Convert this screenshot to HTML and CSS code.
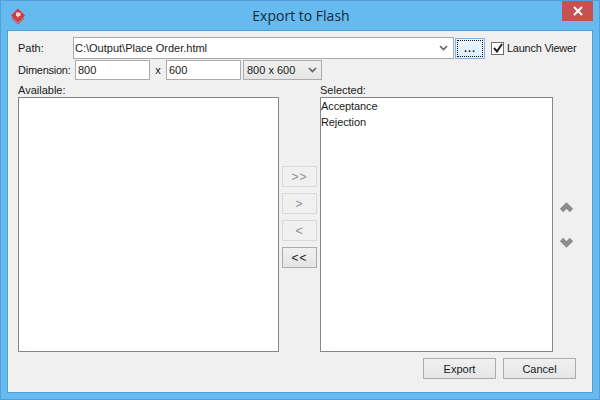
FILE: index.html
```html
<!DOCTYPE html>
<html lang="en-us">
<head>
  <meta charset="utf-8">
  <title>Export to Flash</title>
  <link rel="stylesheet" href="styles.css">
</head>
<body>
  <div class="window">
    <div class="titlebar">
      <svg class="logo" width="16" height="17" viewBox="0 0 16 17">
        <path d="M8 0.5 L15 7.5 L8 14.5 L1 7.5 Z" fill="#d23a40"/>
        <path d="M2 10 L8 16 L14 10" fill="none" stroke="#d4565c" stroke-width="1.2"/>
        <path d="M6 4.5 H10.5 V8 H9 L7.5 10 L7 8 H6 Z" fill="#f6d5d6"/>
      </svg>
      <div class="title">Export to Flash</div>
      <div class="close">
        <svg width="10" height="10" viewBox="0 0 10 10">
          <path d="M1 1 L9 9 M9 1 L1 9" stroke="#fff" stroke-width="2"/>
        </svg>
      </div>
    </div>
    <div class="content">
      <div class="row path-row">
        <label class="path-label">Path:</label>
        <div class="field combo path-combo">
          <span class="grow">C:\Output\Place Order.html</span>
          <svg class="chev" width="9" height="6" viewBox="0 0 9 6"><path d="M1 1 L4.5 4.5 L8 1" fill="none" stroke="#666" stroke-width="1.7"/></svg>
        </div>
        <button class="btn browse"><span class="dots">...</span></button>
        <div class="check">
          <svg width="10" height="10" viewBox="0 0 10 10"><path d="M1 5 L4 8.5 L9 1" fill="none" stroke="#222" stroke-width="2"/></svg>
        </div>
        <span class="tight">Launch Viewer</span>
      </div>
      <div class="row dim-row">
        <label class="dim-label tight">Dimension:</label>
        <div class="field dim-input">800</div>
        <span class="times">x</span>
        <div class="field dim-input second">600</div>
        <div class="size-select">
          <span class="grow">800 x 600</span>
          <svg class="chev" width="9" height="6" viewBox="0 0 9 6"><path d="M1 1 L4.5 4.5 L8 1" fill="none" stroke="#666" stroke-width="1.7"/></svg>
        </div>
      </div>
      <div class="lists">
        <div class="list-label avail-label">Available:</div>
        <div class="list avail"></div>
        <div class="movers">
          <button class="btn mover off">&gt;&gt;</button>
          <button class="btn mover off">&gt;</button>
          <button class="btn mover off">&lt;</button>
          <button class="btn mover">&lt;&lt;</button>
        </div>
        <div class="list-label sel-label">Selected:</div>
        <div class="list sel">
          <div class="item">Acceptance</div>
          <div class="item">Rejection</div>
        </div>
        <div class="order">
          <svg width="15" height="11" viewBox="0 0 15 11"><path d="M2.5 8.5 L7.5 3.5 L12.5 8.5" fill="none" stroke="#8c8c8c" stroke-width="4.6"/></svg>
          <svg width="15" height="11" viewBox="0 0 15 11"><path d="M2.5 2.5 L7.5 7.5 L12.5 2.5" fill="none" stroke="#8c8c8c" stroke-width="4.6"/></svg>
        </div>
      </div>
      <div class="footer">
        <button class="btn action">Export</button>
        <button class="btn action">Cancel</button>
      </div>
    </div>
  </div>
</body>
</html>
```

FILE: styles.css
```css
* {
  box-sizing: border-box;
}
body {
  margin: 0;
  font-family: "Liberation Sans", Arial, sans-serif;
  font-size: 11px;
  color: #1a1a1a;
}
.tight {
  letter-spacing: -0.25px;
}
.window {
  width: 600px;
  height: 400px;
  display: flex;
  flex-direction: column;
  background: #65baf0;
  border: 1px solid #559fd4;
}
.titlebar {
  height: 29px;
  flex: none;
  display: grid;
  grid-template-columns: 1fr auto 1fr;
  align-items: start;
  padding: 0 6px 0 9px;
}
.logo {
  margin-top: 7px;
}
.title {
  margin-top: 5px;
  padding-right: 1px;
  font-family: "Open Sans", sans-serif;
  font-size: 14px;
  line-height: 20px;
  color: #1a2a36;
}
.close {
  justify-self: end;
  width: 31px;
  height: 20px;
  background: #c75050;
  display: flex;
  align-items: center;
  justify-content: center;
}
.content {
  flex: 1;
  margin: 0 6px 6px;
  display: flex;
  flex-direction: column;
  background: #f0f0f0;
  border: 1px solid #559fd4;
  padding: 6px 16px 13px 10px;
}
.row {
  display: flex;
  align-items: center;
}
.grow {
  flex: 1;
}
.field {
  background: #fff;
  border: 1px solid #ababab;
  padding-left: 2px;
  display: flex;
  align-items: center;
}
.path-row {
  height: 22px;
  white-space: nowrap;
}
.path-label {
  flex: none;
  width: 55px;
}
.path-combo {
  flex: none;
  width: 381px;
  height: 22px;
  padding-left: 1px;
  padding-right: 5px;
}
.chev {
  flex: none;
}
.btn {
  font: inherit;
  color: inherit;
  padding: 0;
  background: linear-gradient(#f0f0f0, #e5e5e5);
  border: 1px solid #acacac;
}
.browse {
  flex: none;
  width: 30px;
  height: 21px;
  margin-left: 1px;
  padding: 1px;
  background: linear-gradient(#ecf6fd, #dcedfb);
  border-color: #7eb4ea;
}
.dots {
  display: block;
  height: 100%;
  border: 1px dotted #111;
  line-height: 14px;
  letter-spacing: 1px;
  font-weight: bold;
}
.check {
  flex: none;
  width: 13px;
  height: 13px;
  margin-left: 6px;
  margin-right: 3px;
  background: #fff;
  border: 1px solid #707070;
  display: flex;
  align-items: center;
  justify-content: center;
}
.dim-row {
  height: 20px;
  margin-top: 1px;
}
.dim-label {
  width: 57px;
}
.dim-input {
  width: 75px;
  height: 20px;
}
.times {
  width: 16px;
  text-align: center;
}
.size-select {
  width: 79px;
  height: 20px;
  margin-left: 2px;
  padding: 0 4px 0 3px;
  display: flex;
  align-items: center;
  background: linear-gradient(#f0f0f0, #e5e5e5);
  border: 1px solid #acacac;
}
.lists {
  flex: 1;
  display: grid;
  grid-template-columns: 261px 35px 233px 1fr;
  grid-template-rows: 17px 1fr;
  column-gap: 3px;
}
.list-label {
  line-height: 15px;
  padding-top: 3px;
}
.avail-label {
  grid-column: 1;
  grid-row: 1;
}
.sel-label {
  grid-column: 3;
  grid-row: 1;
}
.list {
  grid-row: 2;
  background: #fff;
  border: 1px solid #828790;
}
.avail {
  grid-column: 1;
}
.sel {
  grid-column: 3;
}
.item {
  height: 16px;
  line-height: 16px;
  letter-spacing: -0.1px;
}
.movers {
  grid-column: 2;
  grid-row: 1 / 3;
  display: flex;
  flex-direction: column;
  justify-content: center;
  gap: 6px;
  padding-top: 2px;
}
.mover {
  height: 21px;
  font-size: 12px;
  letter-spacing: 1px;
}
.mover.off {
  background: #f0f0f0;
  border-color: #d9d9d9;
  color: #8a8f99;
}
.order {
  grid-column: 4;
  grid-row: 2;
  display: flex;
  flex-direction: column;
  justify-content: center;
  align-items: center;
  gap: 24px;
}
.footer {
  margin-top: 6px;
  display: flex;
  justify-content: flex-end;
  gap: 7px;
}
.action {
  width: 73px;
  height: 21px;
}
```
